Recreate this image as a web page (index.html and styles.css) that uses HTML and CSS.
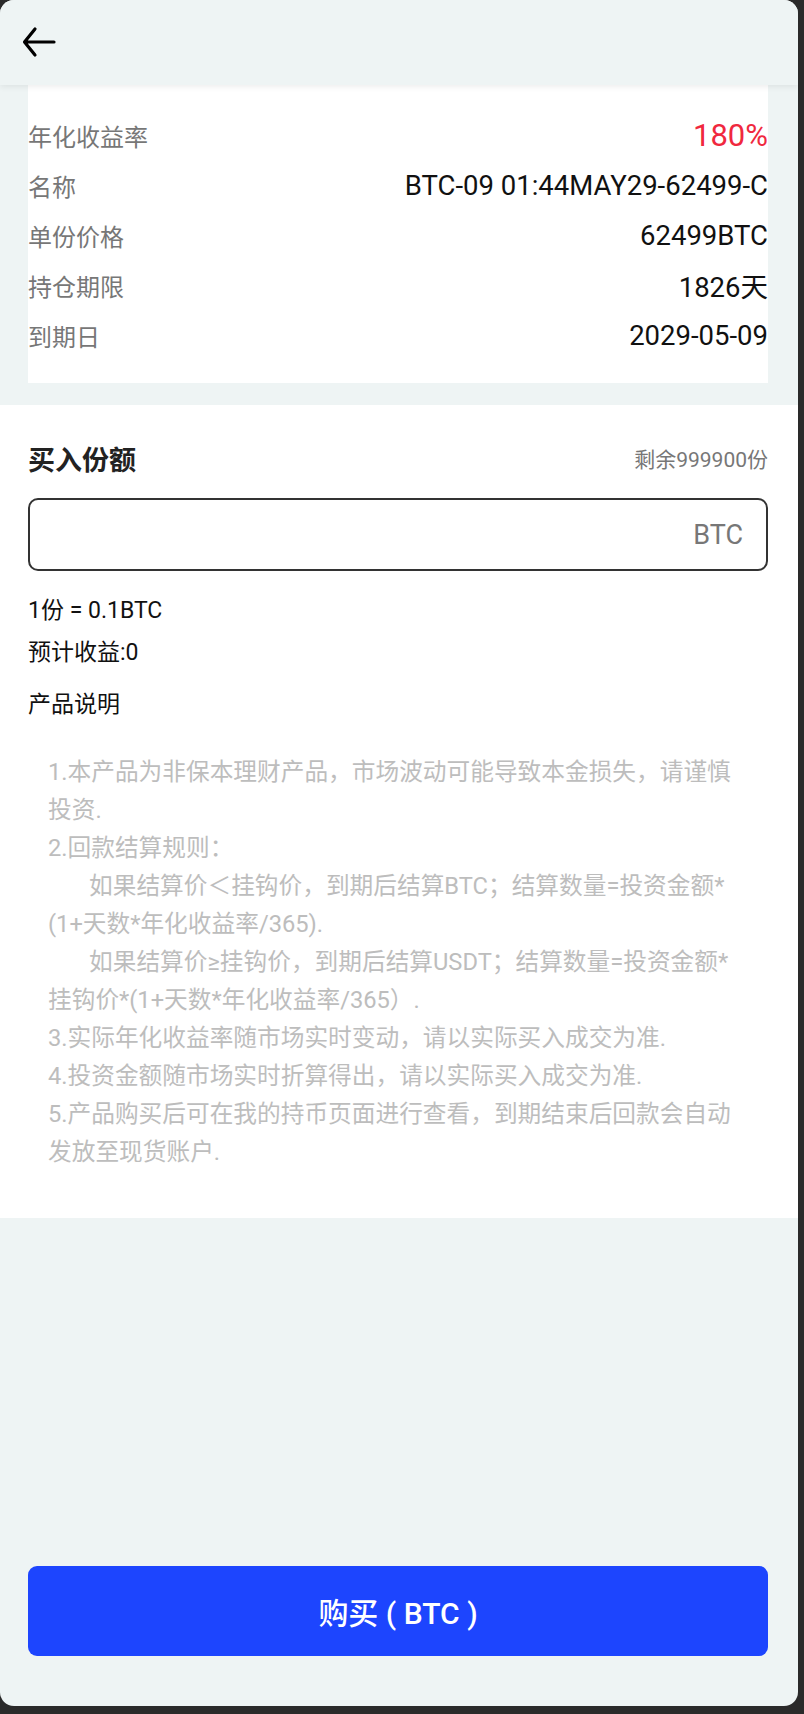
FILE: index.html
```html
<!DOCTYPE html>
<html lang="zh-CN">
<head>
<meta charset="utf-8">
<title>购买</title>
<link rel="stylesheet" href="styles.css">
</head>
<body>
<div class="phone">
  <header class="topbar">
    <svg class="back" width="34" height="32" viewBox="0 0 34 32" aria-hidden="true">
      <path d="M3 16 H32 M13 3 L2.5 16 L13 29" fill="none" stroke="#000" stroke-width="3.2" stroke-linecap="round" stroke-linejoin="round"/>
    </svg>
  </header>

  <section class="info-card">
    <div class="row"><span class="label">年化收益率</span><span class="value red">180%</span></div>
    <div class="row"><span class="label">名称</span><span class="value">BTC-09 01:44MAY29-62499-C</span></div>
    <div class="row"><span class="label">单份价格</span><span class="value">62499BTC</span></div>
    <div class="row"><span class="label">持仓期限</span><span class="value">1826天</span></div>
    <div class="row"><span class="label">到期日</span><span class="value">2029-05-09</span></div>
  </section>

  <section class="buy">
    <div class="buy-head">
      <span class="buy-title">买入份额</span>
      <span class="remain">剩余999900份</span>
    </div>
    <div class="input-box"><span class="unit">BTC</span></div>
    <div class="line">1份 = 0.1BTC</div>
    <div class="line">预计收益:0</div>
    <div class="line desc-title">产品说明</div>
    <div class="desc">
      <p>1.本产品为非保本理财产品，市场波动可能导致本金损失，请谨慎<br>投资.</p>
      <p>2.回款结算规则：</p>
      <p class="indent">如果结算价＜挂钩价，到期后结算BTC；结算数量=投资金额*<br>(1+天数*年化收益率/365).</p>
      <p class="indent">如果结算价≥挂钩价，到期后结算USDT；结算数量=投资金额*<br>挂钩价*(1+天数*年化收益率/365）.</p>
      <p>3.实际年化收益率随市场实时变动，请以实际买入成交为准.</p>
      <p>4.投资金额随市场实时折算得出，请以实际买入成交为准.</p>
      <p>5.产品购买后可在我的持币页面进行查看，到期结束后回款会自动<br>发放至现货账户.</p>
    </div>
  </section>

  <div class="spacer"></div>

  <div class="footer">
    <button class="buy-btn" type="button">购买 ( BTC )</button>
  </div>
</div>
</body>
</html>
```

FILE: styles.css
```css
* { box-sizing: border-box; }

html, body {
  margin: 0;
  padding: 0;
  background: #2a2a2a;
}

body {
  width: 804px;
  height: 1714px;
  overflow: hidden;
  font-family: Roboto, "Noto Sans CJK SC", sans-serif;
}

.phone {
  width: 798px;
  height: 1706px;
  background: #eef4f4;
  border-radius: 14px;
  overflow: hidden;
  display: flex;
  flex-direction: column;
}

.topbar {
  height: 85px;
  flex: none;
  background: #eef4f4;
  display: flex;
  align-items: center;
  padding-left: 22px;
  padding-bottom: 2px;
  box-shadow: 0 2px 6px rgba(0, 0, 0, 0.07);
  position: relative;
  z-index: 1;
}

.back { display: block; }

.info-card {
  margin-left: 28px;
  width: 740px;
  background: #fff;
  padding: 25px 0 23px;
  flex: none;
}

.row {
  height: 50px;
  display: flex;
  align-items: center;
  justify-content: space-between;
}

.label {
  font-size: 24px;
  color: #777;
}

.value {
  font-size: 27.5px;
  color: #111;
}

.value.red {
  font-size: 31px;
  color: #f0283e;
}

.buy {
  margin-top: 22px;
  background: #fff;
  padding: 35px 30px 47px 28px;
  flex: none;
}

.buy-head {
  height: 36px;
  display: flex;
  align-items: center;
  justify-content: space-between;
}

.buy-title {
  font-size: 27px;
  font-weight: 700;
  color: #222;
}

.remain {
  font-size: 21px;
  color: #777;
}

.input-box {
  margin-top: 22px;
  height: 73px;
  border: 2px solid #333;
  border-radius: 10px;
  display: flex;
  align-items: center;
  justify-content: flex-end;
  padding-right: 23px;
}

.unit {
  font-size: 27px;
  color: #777;
}

.line {
  font-size: 23px;
  color: #111;
  line-height: 42px;
}

.input-box + .line { margin-top: 19px; }

.desc-title {
  margin-top: 10px;
}

.desc {
  margin-top: 27px;
  padding-left: 20px;
  font-size: 23.7px;
  line-height: 38px;
  color: #bdbdbd;
  white-space: nowrap;
}

.desc p { margin: 0; }

.desc .indent { text-indent: 41px; }

.spacer { flex: 1; }

.footer {
  padding: 0 30px 50px 28px;
  flex: none;
}

.buy-btn {
  display: block;
  width: 740px;
  height: 90px;
  border: none;
  border-radius: 9px;
  background: #1d45fe;
  color: #fff;
  font-family: Roboto, "Noto Sans CJK SC", sans-serif;
  font-size: 30px;
  font-weight: 500;
  padding: 0;
}
```
